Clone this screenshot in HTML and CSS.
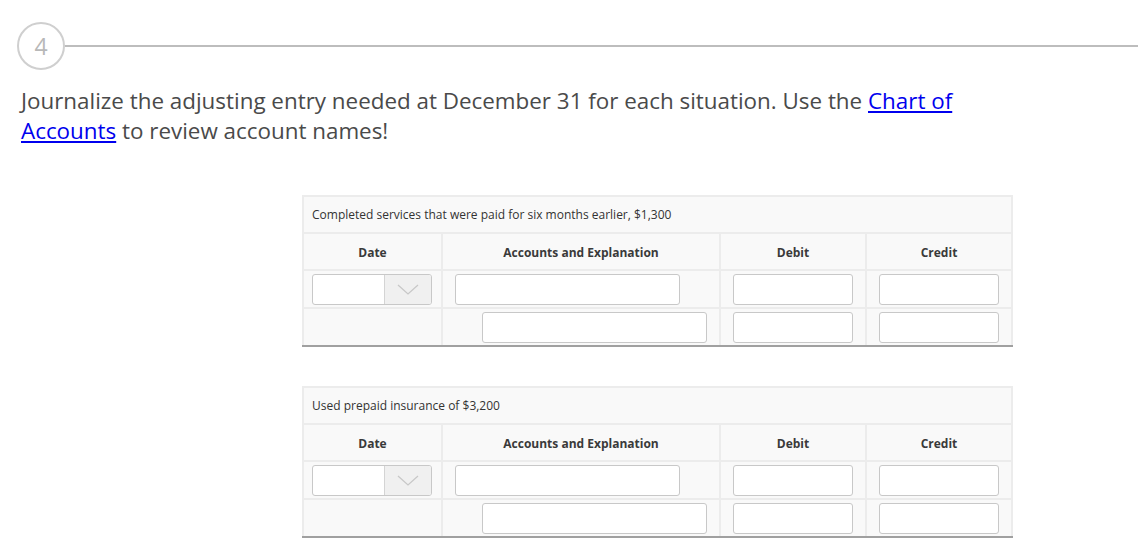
FILE: index.html
```html
<!DOCTYPE html>
<html lang="en">
<head>
    <meta charset="UTF-8">
    <title>Journal Entries</title>
    <link rel="stylesheet" href="styles.css">
</head>
<body>
<div class="step">
    <div class="step-num">4</div>
    <div class="step-line"></div>
</div>

<p class="prompt">Journalize the adjusting entry needed at December 31 for each situation. Use the <a href="#">Chart of
    Accounts</a> to review account names!</p>

<table class="journal">
    <colgroup>
        <col class="c-date">
        <col class="c-acct">
        <col class="c-num">
        <col class="c-num">
    </colgroup>
    <tr class="caption-row">
        <td colspan="4">Completed services that were paid for six months earlier, $1,300</td>
    </tr>
    <tr class="head-row">
        <th>Date</th>
        <th>Accounts and Explanation</th>
        <th>Debit</th>
        <th>Credit</th>
    </tr>
    <tr>
        <td><div class="select"><span class="select-box"></span><span class="select-btn"><svg width="22" height="11" viewBox="0 0 22 11"><path d="M1 1 L11 10 L21 1" fill="none" stroke="#c8c8c8" stroke-width="1.3"/></svg></span></div></td>
        <td><input class="field acct" type="text"></td>
        <td><input class="field" type="text"></td>
        <td><input class="field" type="text"></td>
    </tr>
    <tr>
        <td></td>
        <td><input class="field acct indent" type="text"></td>
        <td><input class="field" type="text"></td>
        <td><input class="field" type="text"></td>
    </tr>
</table>

<table class="journal">
    <colgroup>
        <col class="c-date">
        <col class="c-acct">
        <col class="c-num">
        <col class="c-num">
    </colgroup>
    <tr class="caption-row">
        <td colspan="4">Used prepaid insurance of $3,200</td>
    </tr>
    <tr class="head-row">
        <th>Date</th>
        <th>Accounts and Explanation</th>
        <th>Debit</th>
        <th>Credit</th>
    </tr>
    <tr>
        <td><div class="select"><span class="select-box"></span><span class="select-btn"><svg width="22" height="11" viewBox="0 0 22 11"><path d="M1 1 L11 10 L21 1" fill="none" stroke="#c8c8c8" stroke-width="1.3"/></svg></span></div></td>
        <td><input class="field acct" type="text"></td>
        <td><input class="field" type="text"></td>
        <td><input class="field" type="text"></td>
    </tr>
    <tr>
        <td></td>
        <td><input class="field acct indent" type="text"></td>
        <td><input class="field" type="text"></td>
        <td><input class="field" type="text"></td>
    </tr>
</table>
</body>
</html>
```

FILE: styles.css
```css
body {
    margin: 0;
    font-family: "Open Sans", sans-serif;
    color: #505050;
    background-color: white;
}

.step {
    display: flex;
    align-items: center;
    padding: 22px 0 0 17px;
}

.step-num {
    width: 44px;
    height: 44px;
    border: 2px solid #cfcfcf;
    border-radius: 50%;
    color: #b8b8b8;
    font-size: 23px;
    line-height: 44px;
    text-align: center;
    flex-shrink: 0;
}

.step-line {
    flex: 1;
    height: 2px;
    background-color: #bdbdbd;
}

.prompt {
    margin: 16px 0 0 21px;
    width: 960px;
    font-size: 22.4px;
    line-height: 30px;
    color: #4a4a4a;
}

.prompt a {
    color: #0000ee;
}

.journal {
    margin: 49px 0 0 302px;
    width: 710px;
    table-layout: fixed;
    border-collapse: collapse;
    background-color: #f9f9f9;
    border-bottom: 2px solid #a0a0a0;
    font-size: 12px;
    color: #333333;
}

.journal + .journal {
    margin-top: 39px;
}

.c-date {
    width: 139px;
}

.c-acct {
    width: 278px;
}

.c-num {
    width: 146px;
}

.journal td,
.journal th {
    border: 2px solid #ececec;
    padding: 0;
}

.journal tr:last-child td {
    border-bottom: 2px solid #a0a0a0;
}

.caption-row td {
    height: 35px;
    padding-left: 8px;
    font-size: 12px;
    color: #333333;
}

.head-row th {
    height: 34px;
    padding-top: 1px;
    font-size: 12px;
    font-weight: bold;
    color: #3a3a3a;
    text-align: center;
}

.journal tr:nth-child(n+3) td {
    height: 36px;
    text-align: center;
}

.select {
    display: flex;
    width: 118px;
    height: 29px;
    margin-left: 8px;
    border: 1px solid #c8c8c8;
    border-radius: 3px;
    overflow: hidden;
    background-color: white;
}

.select-box {
    flex: 1;
}

.select-btn {
    width: 46px;
    display: flex;
    align-items: center;
    justify-content: center;
    background-color: #f0f0f0;
    border-left: 1px solid #d4d4d4;
}

.field {
    display: block;
    box-sizing: border-box;
    width: 120px;
    height: 31px;
    margin: 0 auto;
    border: 1px solid #c8c8c8;
    border-radius: 3px;
    background-color: white;
}

.field.acct {
    width: 225px;
    margin-left: 12px;
}

.field.acct.indent {
    margin-left: 39px;
}
```
